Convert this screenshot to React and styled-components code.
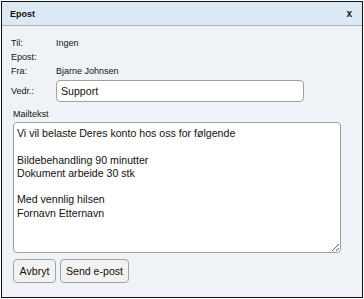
import styled, { createGlobalStyle } from "styled-components";

const GlobalStyle = createGlobalStyle`
  html, body {
    margin: 0;
    padding: 0;
    background: #ffffff;
  }
  body {
    font-family: "Liberation Sans", Arial, sans-serif;
    color: #1a1a1a;
  }
`;

const Dialog = styled.div`
  box-sizing: border-box;
  margin: 1px 0 0 1px;
  width: 362px;
  height: 297px;
  border: 1px solid #111;
  background: #eff3f7;
  display: flex;
  flex-direction: column;
`;

const TitleBar = styled.div`
  box-sizing: border-box;
  height: 24px;
  padding: 0 10px 0 8px;
  display: flex;
  align-items: center;
  justify-content: space-between;
  background: #dde9f5;
  border-bottom: 1px solid #a5b0ba;
  font-size: 9px;
  font-weight: bold;
  color: #111;
`;

const Close = styled.span`
  font-size: 10px;
  font-weight: bold;
  cursor: pointer;
`;

const Body = styled.div`
  padding: 10px 20px 0 9px;
  display: flex;
  flex-direction: column;
`;

const InfoRow = styled.div`
  display: flex;
  align-items: center;
  height: 14px;
  font-size: 9px;
  color: #111;
`;

const Label = styled.span`
  width: 45px;
  flex: none;
`;

const SubjectRow = styled.div`
  display: flex;
  align-items: center;
  margin-top: 2px;
  font-size: 9px;
  color: #111;
`;

const TextInput = styled.input`
  box-sizing: border-box;
  width: 248px;
  height: 22px;
  border: 1px solid #a0a0a0;
  border-radius: 4px;
  background: #fff;
  padding: 0 4px;
  font-family: "Liberation Sans", Arial, sans-serif;
  font-size: 10.6px;
  color: #111;
  outline: none;
`;

const SectionLabel = styled.div`
  font-size: 9px;
  margin: 6px 0 0 2px;
  line-height: 12px;
  color: #111;
`;

const MessageBox = styled.textarea`
  box-sizing: border-box;
  width: 328px;
  height: 131px;
  margin: 2px 0 0 2px;
  border: 1px solid #a0a0a0;
  border-radius: 4px;
  background: #fff;
  padding: 4px 3px;
  font-family: "Liberation Sans", Arial, sans-serif;
  font-size: 10.6px;
  line-height: 13.3px;
  color: #111;
  outline: none;
  resize: both;
`;

const Actions = styled.div`
  display: flex;
  gap: 4px;
  margin: 6px 0 0 2px;
`;

const Button = styled.button`
  box-sizing: border-box;
  height: 24px;
  width: ${(p) => p.$w}px;
  padding: 0;
  border: 1px solid #a3a3a3;
  border-radius: 4px;
  background: #f2f2f2;
  font-family: "Liberation Sans", Arial, sans-serif;
  font-size: 10.6px;
  color: #111;
`;

const message = `Vi vil belaste Deres konto hos oss for følgende

Bildebehandling 90 minutter
Dokument arbeide 30 stk

Med vennlig hilsen
Fornavn Etternavn`;

export default function App() {
  return (
    <>
      <GlobalStyle />
      <Dialog>
        <TitleBar>
          <span>Epost</span>
          <Close>x</Close>
        </TitleBar>
        <Body>
          <InfoRow>
            <Label>Til:</Label>
            <span>Ingen</span>
          </InfoRow>
          <InfoRow>
            <Label>Epost:</Label>
          </InfoRow>
          <InfoRow>
            <Label>Fra:</Label>
            <span>Bjarne Johnsen</span>
          </InfoRow>
          <SubjectRow>
            <Label>Vedr.:</Label>
            <TextInput defaultValue="Support" />
          </SubjectRow>
          <SectionLabel>Mailtekst</SectionLabel>
          <MessageBox defaultValue={message} />
          <Actions>
            <Button $w={43}>Avbryt</Button>
            <Button $w={69}>Send e-post</Button>
          </Actions>
        </Body>
      </Dialog>
    </>
  );
}
